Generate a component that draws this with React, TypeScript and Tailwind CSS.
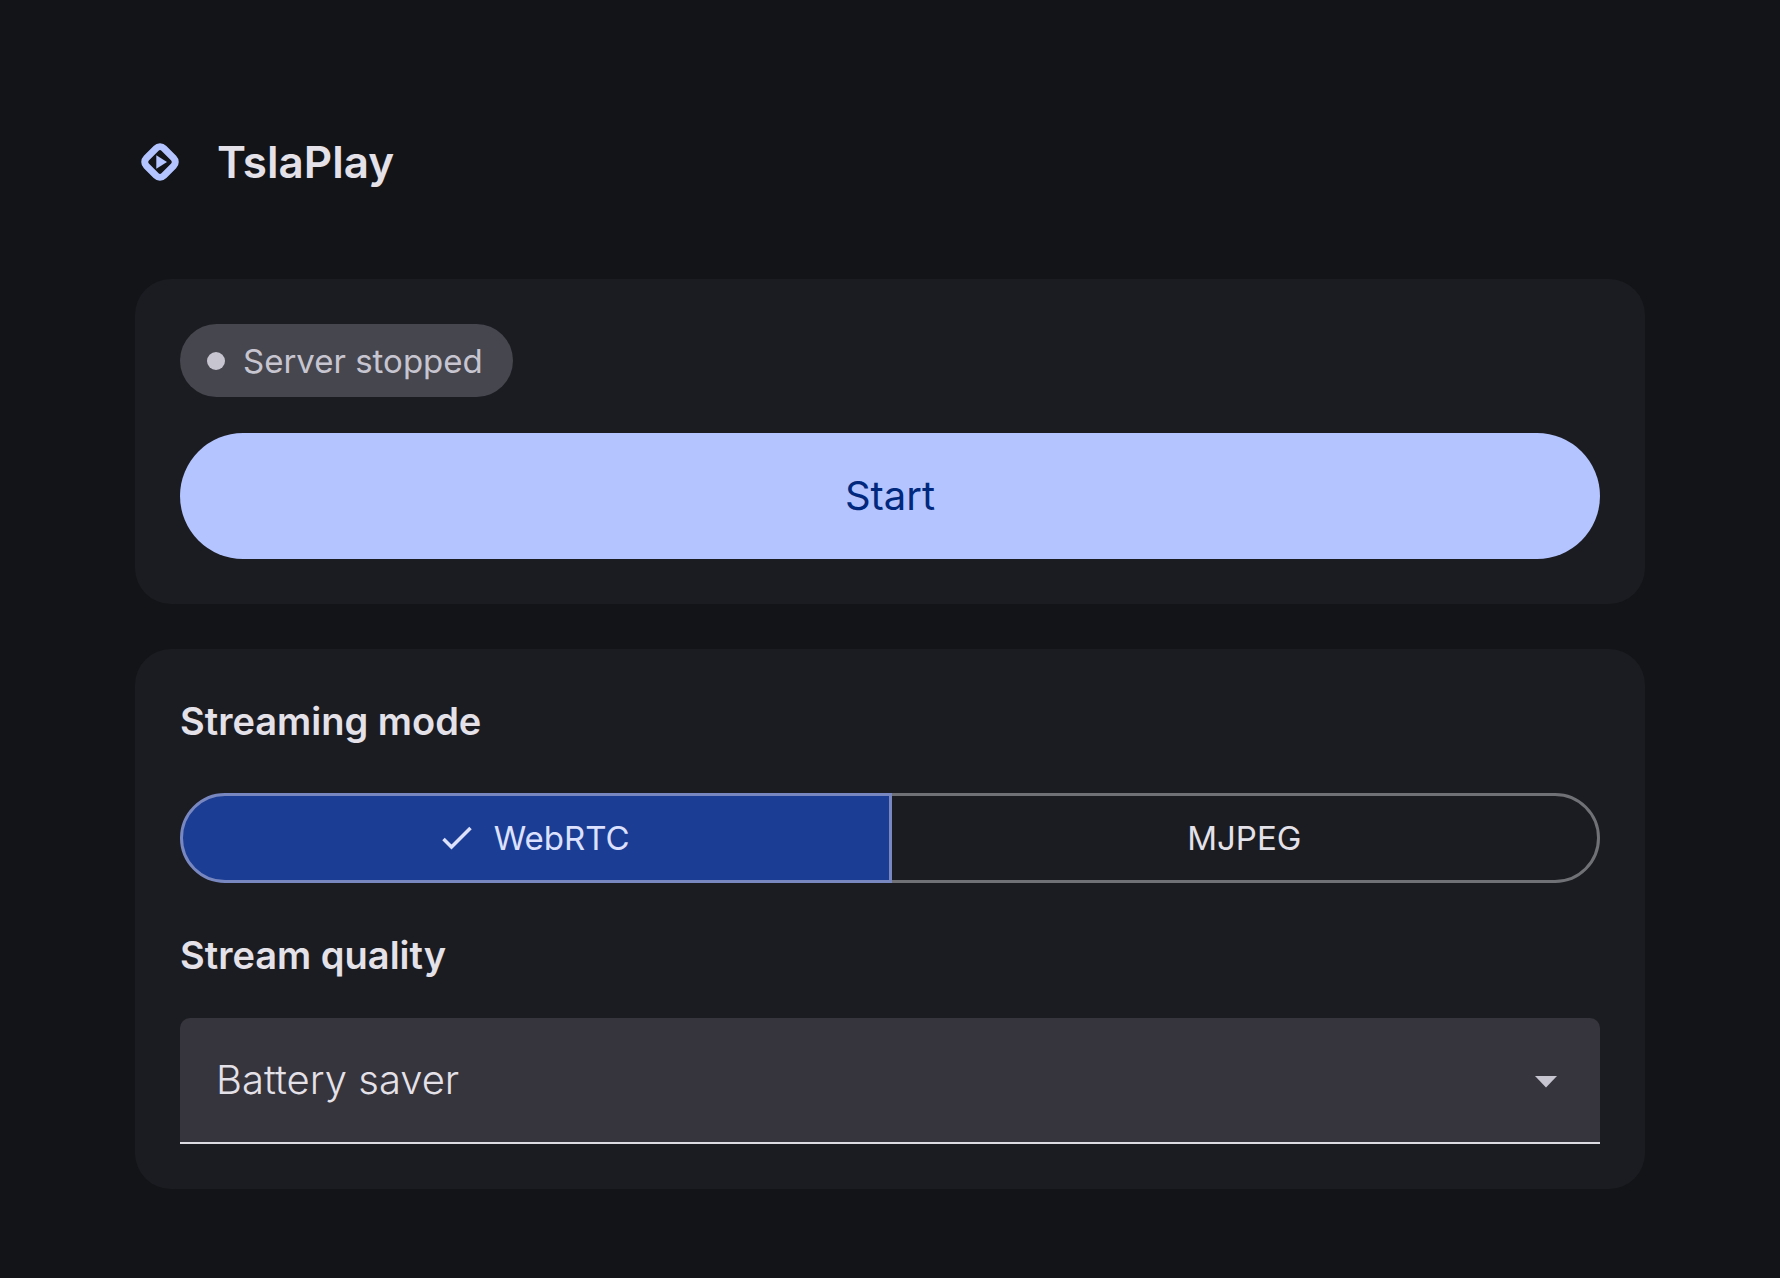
import { useState } from "react";
import type { ReactNode } from "react";

const modes = ["WebRTC", "MJPEG"];
const qualities = ["Battery saver", "Balanced", "High quality"];

const Logo = () => {
  return (
    <svg viewBox="0 0 40 40" className="size-10 shrink-0" fill="none" aria-hidden="true">
      <rect
        x="7.6"
        y="7.6"
        width="24.8"
        height="24.8"
        rx="5.5"
        transform="rotate(45 20 20)"
        stroke="#b4c4ff"
        strokeWidth="7"
      />
      <path d="M16.3 13.3v13.4L27 20z" fill="#b4c4ff" />
    </svg>
  );
};

const Card = ({ children }: { children: ReactNode }) => {
  return <section className="flex flex-col rounded-[36px] bg-[#1b1c21] p-[45px]">{children}</section>;
};

const StatusChip = () => {
  return (
    <div className="flex h-[73px] items-center gap-[18px] self-start rounded-full bg-[#46464f] pr-[30px] pl-[27px]">
      <span className="size-[18px] rounded-full bg-[#c7c5d0]" />
      <span className="text-[33px] leading-[48px] text-[#c7c5d0]">Server stopped</span>
    </div>
  );
};

const ModeSwitch = () => {
  const [mode, setMode] = useState("WebRTC");

  return (
    <div role="group" aria-labelledby="mode-title" className="mt-[45px] flex">
      {modes.map((item) => {
        const active = item === mode;
        return (
          <button
            key={item}
            type="button"
            aria-pressed={active}
            onClick={() => setMode(item)}
            className={`flex h-[90px] flex-1 items-center justify-center gap-[22px] border-[3px] text-[33px] leading-[48px] first:rounded-l-full last:-ml-[3px] last:rounded-r-full ${
              active
                ? "relative z-10 border-[#7887c0] bg-[#1c3d94] text-[#dce1ff]"
                : "border-[#707176] text-[#e4e1e9]"
            }`}
          >
            {active && (
              <svg viewBox="0 0 30 24" className="h-6 w-[30px]" fill="none" aria-hidden="true">
                <path d="M1.5 13l8 8L28.5 2" stroke="#dce1ff" strokeWidth="3.5" />
              </svg>
            )}
            {item}
          </button>
        );
      })}
    </div>
  );
};

const QualitySelect = () => {
  return (
    <div className="relative mt-9">
      <select
        id="quality"
        className="block h-[126px] w-full appearance-none rounded-t-[10px] border-b-2 border-[#dddce2] bg-[#36343c] pr-24 pl-9 text-[40px] font-light text-[#e4e1e9]"
      >
        {qualities.map((item) => (
          <option key={item}>{item}</option>
        ))}
      </select>
      <svg
        viewBox="0 0 22 12"
        className="pointer-events-none absolute top-[58px] right-[43px] h-3 w-[22px]"
        fill="#c7c5d0"
        aria-hidden="true"
      >
        <path d="M0 0h22L11 11.5z" />
      </svg>
    </div>
  );
};

const App = () => {
  return (
    <main className="min-h-screen bg-[#131418] px-[135px] pt-[126px] pb-[90px] font-['Inter','Noto_Sans',sans-serif] text-[#e4e1e9]">
      <header className="flex h-[72px] items-center gap-[37px] pl-[5px]">
        <Logo />
        <h1 className="text-[44px] leading-[72px] font-semibold">TslaPlay</h1>
      </header>
      <div className="mt-[81px] flex flex-col gap-[45px]">
        <Card>
          <StatusChip />
          <button
            type="button"
            className="mt-9 h-[126px] rounded-full bg-[#b4c4ff] text-[40px] text-[#00287d]"
          >
            Start
          </button>
        </Card>
        <Card>
          <h2 id="mode-title" className="text-[38px] leading-[54px] font-semibold">
            Streaming mode
          </h2>
          <ModeSwitch />
          <label htmlFor="quality" className="mt-[45px] text-[38px] leading-[54px] font-semibold">
            Stream quality
          </label>
          <QualitySelect />
        </Card>
      </div>
    </main>
  );
};

export default App;
